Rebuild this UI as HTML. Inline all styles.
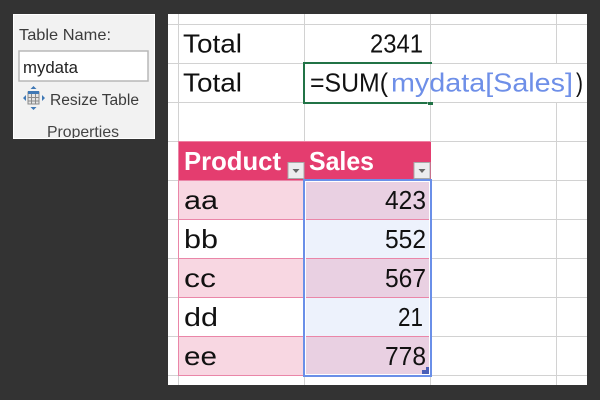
<!DOCTYPE html>
<html><head><meta charset="utf-8">
<style>
html,body{margin:0;padding:0;background:#333;width:600px;height:400px;overflow:hidden}
svg{display:block}
text{font-family:"Liberation Sans",sans-serif}
</style></head><body>
<svg width="600" height="400" viewBox="0 0 600 400" xmlns="http://www.w3.org/2000/svg">
<rect width="600" height="400" fill="#333"/>
<!-- ribbon panel -->
<rect x="13" y="14" width="142" height="125" fill="#fff"/>
<rect x="14" y="15" width="140" height="123" fill="#f2f2f2"/>
<text x="19" y="40" font-size="16" fill="#3c3c3c" textLength="92" lengthAdjust="spacingAndGlyphs">Table Name:</text>
<rect x="19" y="51" width="129" height="30" fill="#fff" stroke="#b8b8b8" stroke-width="1.5"/>
<text x="23" y="73" font-size="16.5" fill="#222" textLength="55" lengthAdjust="spacingAndGlyphs">mydata</text>
<g>
<rect x="28" y="92" width="11" height="12" fill="#e4e4e4" stroke="#8a8a8a" stroke-width="1"/>
<rect x="28" y="91" width="11" height="3" fill="#3f78b5"/>
<path d="M31.5 94v10M35.5 94v10M28 97.5h11M28 101h11" stroke="#8a8a8a" stroke-width="1" fill="none"/>
<path d="M33.5 86l3 3h-6zM33.5 110l3-3h-6zM23 98l3-3v6zM45 98l-3-3v6z" fill="#3f78b5"/>
</g>
<text x="50" y="105" font-size="15.5" fill="#3c3c3c" textLength="89" lengthAdjust="spacingAndGlyphs">Resize Table</text>
<svg x="14" y="15" width="140" height="123" viewBox="14 15 140 123"><text x="47" y="137" font-size="16" fill="#444" textLength="72" lengthAdjust="spacingAndGlyphs">Properties</text></svg>
<!-- sheet -->
<rect x="168" y="14" width="419" height="371" fill="#fff"/>
<g stroke="#d2d2d2" stroke-width="1" fill="none">
<path d="M168 24.5h419M168 63.5h419M168 102.5h419M168 141.5h419M168 180.5h419M168 219.5h419M168 258.5h419M168 297.5h419M168 336.5h419M168 375.5h419"/>
<path d="M178.5 14v371M304.5 14v371M430.5 14v371M556.5 14v371"/>
</g>
<!-- overflow of formula text hides gridlines -->
<rect x="431" y="64" width="156" height="38" fill="#fff"/>
<!-- table -->
<rect x="179" y="142" width="252" height="38" fill="#e43d6f"/>
<path d="M178.5 141.5h252" stroke="#ee7fa2" stroke-width="1"/>
<rect x="179" y="181" width="125" height="38" fill="#f8d7e2"/>
<rect x="179" y="220" width="125" height="38" fill="#fff"/>
<rect x="179" y="259" width="125" height="38" fill="#f8d7e2"/>
<rect x="179" y="298" width="125" height="38" fill="#fff"/>
<rect x="179" y="337" width="125" height="38" fill="#f8d7e2"/>
<rect x="305" y="181" width="125" height="39" fill="#e9d0e2"/>
<rect x="305" y="220" width="125" height="38" fill="#edf2fc"/>
<rect x="305" y="259" width="125" height="38" fill="#e9d0e2"/>
<rect x="305" y="298" width="125" height="38" fill="#edf2fc"/>
<rect x="305" y="337" width="125" height="39" fill="#e9d0e2"/>
<path d="M178 180.5h253M178 219.5h253M178 258.5h253M178 297.5h253M178 336.5h253M178 375.5h126M178.5 141v235" stroke="#ea86a8" stroke-width="1" fill="none"/>
<!-- text -->
<text x="183" y="52.5" font-size="26" fill="#111" textLength="59" lengthAdjust="spacingAndGlyphs">Total</text>
<text x="370" y="52.5" font-size="26" fill="#111" textLength="53" lengthAdjust="spacingAndGlyphs">2341</text>
<text x="183" y="91.5" font-size="26" fill="#111" textLength="59" lengthAdjust="spacingAndGlyphs">Total</text>
<text x="310" y="91.5" font-size="26" fill="#111" textLength="78" lengthAdjust="spacingAndGlyphs">=SUM(</text>
<text x="391" y="91.5" font-size="26" fill="#6e8fe8" textLength="182" lengthAdjust="spacingAndGlyphs">mydata[Sales]</text>
<text x="576" y="91.5" font-size="26" fill="#111" textLength="7" lengthAdjust="spacingAndGlyphs">)</text>
<text x="184" y="170" font-size="26" font-weight="bold" fill="#fff" textLength="97" lengthAdjust="spacingAndGlyphs">Product</text>
<text x="309" y="170" font-size="26" font-weight="bold" fill="#fff" textLength="65" lengthAdjust="spacingAndGlyphs">Sales</text>
<text x="184" y="209" font-size="26" fill="#111" textLength="34" lengthAdjust="spacingAndGlyphs">aa</text>
<text x="184" y="248" font-size="26" fill="#111" textLength="34" lengthAdjust="spacingAndGlyphs">bb</text>
<text x="184" y="287" font-size="26" fill="#111" textLength="32" lengthAdjust="spacingAndGlyphs">cc</text>
<text x="184" y="326" font-size="26" fill="#111" textLength="34" lengthAdjust="spacingAndGlyphs">dd</text>
<text x="184" y="365" font-size="26" fill="#111" textLength="33" lengthAdjust="spacingAndGlyphs">ee</text>
<text x="385" y="209" font-size="26" fill="#111" textLength="41" lengthAdjust="spacingAndGlyphs">423</text>
<text x="385" y="248" font-size="26" fill="#111" textLength="41" lengthAdjust="spacingAndGlyphs">552</text>
<text x="385" y="287" font-size="26" fill="#111" textLength="41" lengthAdjust="spacingAndGlyphs">567</text>
<text x="398" y="326" font-size="26" fill="#111" textLength="25" lengthAdjust="spacingAndGlyphs">21</text>
<text x="385" y="365" font-size="26" fill="#111" textLength="41" lengthAdjust="spacingAndGlyphs">778</text>
<!-- filter buttons -->
<rect x="288" y="162.5" width="16" height="16" fill="#ececee" stroke="#a8a8a8" stroke-width="1"/>
<path d="M292.5 169h7l-3.5 4z" fill="#666"/>
<rect x="414" y="162.5" width="16" height="16" fill="#ececee" stroke="#a8a8a8" stroke-width="1"/>
<path d="M418.5 169h7l-3.5 4z" fill="#666"/>
<!-- selection -->
<rect x="304" y="180" width="127" height="196" fill="none" stroke="#6a8fe8" stroke-width="2"/>
<rect x="305.5" y="181.5" width="124" height="193" fill="none" stroke="#fff" stroke-width="1"/>
<path d="M426 367h3v7h-7v-4h4z" fill="#4a5fb8"/>
<!-- active cell -->
<path d="M432 63H304V103H427.5" fill="none" stroke="#217346" stroke-width="2"/>
<rect x="428" y="102" width="5" height="3" fill="#217346"/>
</svg>
</body></html>
